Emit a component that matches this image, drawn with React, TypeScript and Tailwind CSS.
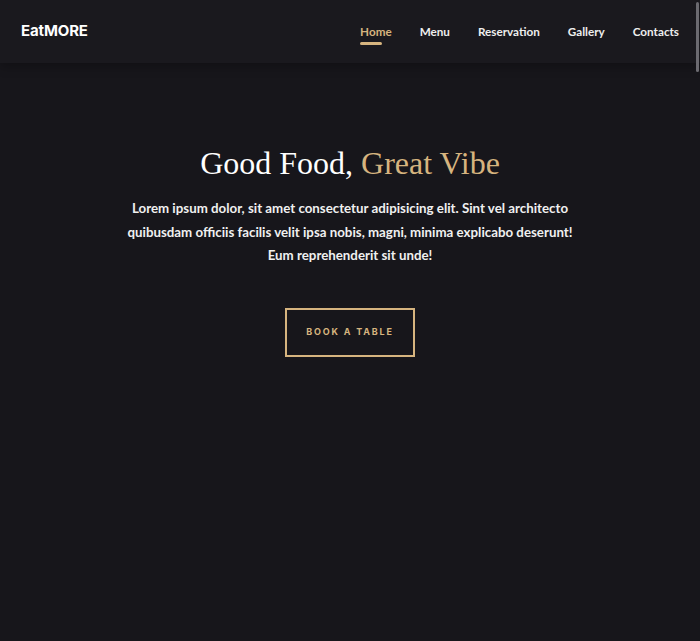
import React from "react";

export default function App() {
  const nav = ["Home", "Menu", "Reservation", "Gallery", "Contacts"];
  return (
    <div
      className="relative min-h-[641px] w-full bg-[#17161b] text-white overflow-hidden"
      style={{ fontFamily: "Inter, 'Noto Sans', sans-serif" }}
    >
      <header className="flex h-[63px] items-center justify-between bg-[#1a191e] pl-[21px] pr-[21px] shadow-[0_4px_10px_rgba(0,0,0,0.25)]">
        <div className="text-[15px] font-bold tracking-[-0.01em] text-white">EatMORE</div>
        <nav
          className="flex items-center gap-[28px] text-[11.7px] font-bold"
          style={{ fontFamily: "Lato, sans-serif" }}
        >
          {nav.map((n, i) => (
            <div key={n} className="relative">
              <span className={i === 0 ? "text-[#d6b47f]" : "text-[#eeeeee]"}>{n}</span>
              {i === 0 && (
                <span className="absolute left-0 top-[19px] h-[3px] w-[22px] rounded-full bg-[#d6b47f]" />
              )}
            </div>
          ))}
        </nav>
      </header>

      <main className="flex flex-col items-center pt-[80px] text-center">
        <h1
          className="text-[32px] leading-[40px] text-white"
          style={{ fontFamily: "'Liberation Serif', serif" }}
        >
          Good Food, <span className="text-[#d6b47f]">Great Vibe</span>
        </h1>
        <p
          className="mt-[14px] text-[13.3px] leading-[23.5px] font-bold text-[#f0f0f0]"
          style={{ fontFamily: "Lato, sans-serif" }}
        >
          Lorem ipsum dolor, sit amet consectetur adipisicing elit. Sint vel architecto
          <br />
          quibusdam officiis facilis velit ipsa nobis, magni, minima explicabo deserunt!
          <br />
          Eum reprehenderit sit unde!
        </p>
        <button className="mt-[40px] flex h-[49px] w-[130px] items-center justify-center border-2 border-[#d6b47f] text-[9px] font-bold tracking-[0.2em] text-[#d6b47f]">
          BOOK A TABLE
        </button>
      </main>

      <div className="absolute right-[1px] top-[2px] h-[70px] w-[3px] rounded-full bg-[#6b6a70]" />
    </div>
  );
}
